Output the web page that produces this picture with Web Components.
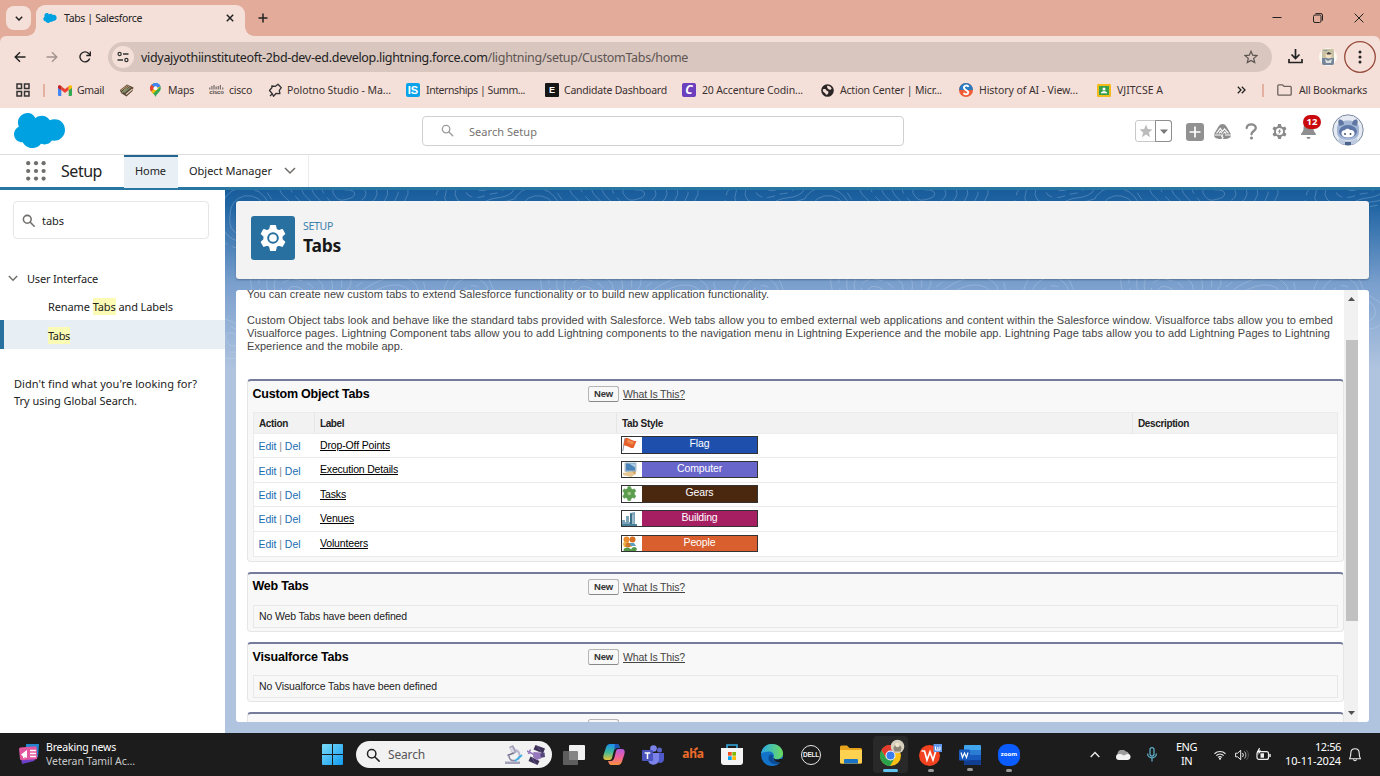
<!DOCTYPE html>
<html lang="en">
<head>
<meta charset="utf-8">
<title>Tabs | Salesforce</title>
<style>
html,body{margin:0;height:100%;overflow:hidden}
body{font-family:"Noto Sans","Open Sans",sans-serif;font-size:11px;color:#222}
</style>
</head>
<body>
<desktop-screen></desktop-screen>
<script>
const svg=(w,h,vb,body,more='')=>`<svg width="${w}" height="${h}" viewBox="${vb}" fill="none" ${more}>${body}</svg>`;
const CLOUD='<path fill="#00a1e0" d="M21 6a10 10 0 0 1 7-3c4 0 7 2 8.500 5a12 12 0 0 1 4.800-1C48 7 52 12.500 52 19s-5 12-11 12l-2.500-.3A8.500 8.500 0 0 1 31 35l-3.500-.7A10 10 0 0 1 18.500 39c-4.500 0-8-3-9.500-6.500H7C3 32 0 28 0 23.500 0 20 2 16.800 5 15A11 11 0 0 1 4 10.500C4 5 8.500 0 14 0c3.500 0 6 2 7.500 5z"/>';
const GEAR='<path fill-rule="evenodd" d="M10 1.500h4l.7 3.100 2.200 1.300 3-1 2 3.500-2.300 2.100v2.900l2.300 2.100-2 3.500-3-1-2.200 1.300-.7 3.200h-4l-.7-3.200-2.200-1.300-3 1-2-3.500 2.300-2.100v-2.900L2.100 8.400l2-3.500 3 1 2.200-1.300zM12 7a5 5 0 1 0 0 10 5 5 0 0 0 0-10z"/>';
const MAG=(s,c,w)=>svg(s,s,'0 0 16 16',`<circle cx="6.500" cy="6.500" r="4.800" stroke="${c}" stroke-width="${w}"/><path d="M10.200 10.200L15 15" stroke="${c}" stroke-width="${w}" stroke-linecap="round"/>`);
const I={
 cloud:svg(51,35,'0 0 52 39',CLOUD,'preserveAspectRatio="none"'),
 cloudS:svg(14,10,'0 0 52 39',CLOUD),
 down:svg(8,5,'0 0 8 5','<path d="M.8.8L4 4 7.200.8" stroke="#222" stroke-width="1.500"/>'),
 close:svg(8,8,'0 0 8 8','<path d="M.8.8l6.400 6.400M7.200.8L.8 7.200" stroke="#222" stroke-width="1.500"/>'),
 plus:svg(10,10,'0 0 10 10','<path d="M5 .5v9M.5 5h9" stroke="#222" stroke-width="1.500"/>'),
 min:svg(10,10,'0 0 10 10','<path d="M.5 4.500h9" stroke="#222"/>'),
 max:svg(10,10,'0 0 10 10','<rect x=".5" y="2" width="7.500" height="7.500" rx="1.500" stroke="#222"/><path d="M2.500.6H8a1.500 1.500 0 0 1 1.500 1.500v5.500" stroke="#222"/>'),
 x:svg(10,10,'0 0 10 10','<path d="M.6.600l8.800 8.800M9.400.6L.6 9.400" stroke="#222"/>'),
 back:svg(12,12,'0 0 12 12','<path d="M11.500 6H1.500M6 1.200L1.200 6 6 10.800" stroke="#222" stroke-width="1.400"/>'),
 fwd:svg(12,12,'0 0 12 12','<path d="M.5 6h10M6 1.200L10.800 6 6 10.800" stroke="#a1938e" stroke-width="1.400"/>'),
 reload:svg(12,12,'0 0 12 12','<path d="M10.700 7.500A5 5 0 1 1 9.600 2.400L11 3.800" stroke="#222" stroke-width="1.400"/><path d="M11.300.5v4H7.300" stroke="#222" stroke-width="1.400"/>'),
 tune:svg(12,12,'0 0 12 12','<circle cx="2.600" cy="3" r="1.600" stroke="#333" stroke-width="1.200"/><path d="M6 3h5.500M.5 9H6" stroke="#333" stroke-width="1.300"/><circle cx="9.400" cy="9" r="1.600" stroke="#333" stroke-width="1.200"/>'),
 star:svg(14,14,'0 0 14 14','<path d="M7 1.300l1.700 3.900 4.200.4-3.200 2.800 1 4.200L7 10.400l-3.700 2.200 1-4.200L1.100 5.600l4.200-.4z" stroke="#5b5350" stroke-width="1.200"/>'),
 dl:svg(15,15,'0 0 15 15','<path d="M7.500 0v9M3.500 5.500l4 4 4-4M1 10v3.500h13V10" stroke="#222" stroke-width="1.700"/>'),
 prof:svg(18,18,'0 0 18 18','<circle cx="9" cy="9" r="9" fill="#fbf7f1"/><rect x="3" y="1" width="12" height="16" rx="2" fill="#c9c1a4"/><path d="M3 10h12v5a2 2 0 0 1-2 2H5a2 2 0 0 1-2-2z" fill="#76859a"/><circle cx="9.500" cy="7.500" r="3" fill="#f1dfc0"/><path d="M7.500 5.500l2-1.500 3 1.500-1 1H8z" fill="#444"/><path d="M6 11l3 2 4-2-1 4H7z" fill="#dce2de"/><path d="M4.500 2.500h4" stroke="#86a0a4"/>'),
 menu:svg(32,32,'0 0 32 32','<circle cx="16" cy="16" r="15.300" stroke="#96483a" stroke-width="1.300"/><g fill="#222"><circle cx="16" cy="11" r="1.500"/><circle cx="16" cy="16" r="1.500"/><circle cx="16" cy="21" r="1.500"/></g>'),
 apps:svg(14,14,'0 0 14 14','<g stroke="#333" stroke-width="1.500"><rect x="1" y="1" width="4.500" height="4.500"/><rect x="8.500" y="1" width="4.500" height="4.500"/><rect x="1" y="8.500" width="4.500" height="4.500"/><rect x="8.500" y="8.500" width="4.500" height="4.500"/></g>'),
 bar:svg(2,13,'0 0 2 13','<path d="M1 0v13" stroke="#e0a593" stroke-width="1.600"/>'),
 gmail:svg(14,11,'0 0 14 11','<path d="M0 1.500V10a1 1 0 0 0 1 1h2.300V4z" fill="#4285f4"/><path d="M10.700 11H13a1 1 0 0 0 1-1V1.500L10.700 4z" fill="#34a853"/><path d="M3.300 5V1.200L7 4l3.700-2.800V5L7 7.900z" fill="#ea4335"/><path d="M0 1.500V3l3.300 2.300V1.200L2.600.600C1.400-.3 0 .3 0 1.500z" fill="#c5221f"/><path d="M14 1.500V3l-3.300 2.300V1.200l.7-.6C12.600-.3 14 .3 14 1.500z" fill="#fbbc04"/>'),
 books:svg(14,14,'0 0 14 14','<path d="M0 7l7-5.500L13.500 4.500 12.500 8 6.500 13.500 1 10z" fill="#5a4334"/><path d="M1 7.500L7.500 2.500M2.500 8.500l6.500-5.500" stroke="#c9a678"/><path d="M4 9.500l6.500-5.500M1.500 10L7 5.500" stroke="#7e8f6c" stroke-width="1.200"/><path d="M6 11.500l6.500-5.500" stroke="#e0d5bd" stroke-width="1.100"/>'),
 maps:svg(11,14,'0 0 11 14','<path d="M5.500 0A5.300 5.300 0 0 1 10.800 5.300C10.800 9 7 10 5.500 14 4 10 .2 9 .2 5.300A5.300 5.300 0 0 1 5.500 0z" fill="#34a853"/><path d="M5.500 0A5.300 5.300 0 0 1 10.500 3.500L5.500 5.300 1.500 1.800A5.300 5.300 0 0 1 5.500 0z" fill="#4285f4"/><path d="M1.500 1.800L5.500 5.300 1.300 8.500A5 5 0 0 1 1.500 1.800z" fill="#ea4335"/><path d="M1.300 8.500l7-7A5 5 0 0 1 10.500 3.500L3 10.700z" fill="#fbbc04"/><path d="M5.500 0a5.300 5.300 0 0 1 5 3.500L6 5z" fill="#4285f4"/><circle cx="5.500" cy="5.200" r="2" fill="#fff"/>'),
 cisco:`<div style="width:15px;text-align:center">${svg(15,5,'0 0 15 5','<path d="M.8 2.500v2M2.900 1v3.500M5 0v4.500M7.100 1.500v3M9.200 1v3.500M11.300 0v4.500M13.800 2.500v2" stroke="#5b5553"/>')}<div style="font:bold 6px/5px 'Liberation Sans';color:#544e4c;letter-spacing:-.2px">cisco</div></div>`,
 polo:svg(15,15,'0 0 15 15','<path d="M4.300 10.700L1.500 7.500 4 4.500 3.800 3l3.700.3L10 1.200l3.300 3.500-2 2.600.6 3.400-3.900-.2-2.500 2.800zM4.300 10.700L2 13" stroke="#333" stroke-width="1.300" stroke-linejoin="round"/>'),
 is:'<div style="width:14px;height:14px;border-radius:2px;background:#0aa3ea;color:#fff;font:bold 11px/14px \'Liberation Sans\';text-align:center">IS</div>',
 e:'<div style="width:14px;height:14px;border-radius:1px;background:#161616;color:#fff;font:bold 9px/14px \'Liberation Sans\';text-align:center">E</div>',
 c:'<div style="width:14px;height:14px;border-radius:2px;background:#6b3fbe;color:#fff;font:italic bold 12px/14px \'Noto Sans\';text-align:center">C</div>',
 globe:svg(13,13,'0 0 13 13','<circle cx="6.500" cy="6.500" r="6.300" fill="#2b2625"/><path d="M1.800 5.500C3.500 4.700 5 5.200 5.300 6.200S7.500 6.700 7.500 8.200 5.800 11 5.300 10.800 4.500 9 3.500 8.700 1.800 7.500 1.800 5.500zM6 2c1-.9 4 .7 4.700 2.500-1 1.500-1.700 1.500-2.700 1S6 3.800 6 2z" fill="#f5e0d9"/>'),
 hist:svg(14,14,'0 0 14 14','<circle cx="7" cy="7" r="7" fill="#f05a35"/><path d="M0 7a7 7 0 0 1 14 0z" fill="#2a7bc0"/><path d="M9.500 4C8.500 1.500 4.500 2.500 5 5s4.500 2.300 4.300 4.500S5.500 12 4.700 9.700" stroke="#fff" stroke-width="1.900"/>'),
 cls:svg(14,13,'0 0 14 13','<rect width="14" height="13" rx="1" fill="#f2bc1c"/><rect x="2" y="2" width="10" height="9" fill="#3a9f4a"/><circle cx="7" cy="5" r="1.500" fill="#fff"/><path d="M3.800 9.200c.5-2.500 5.900-2.500 6.400 0z" fill="#fff"/>'),
 more:svg(9,8,'0 0 9 8','<path d="M.8.8L4 4 .8 7.200M4.800.8L8 4 4.800 7.200" stroke="#222" stroke-width="1.300"/>'),
 folder:svg(15,12,'0 0 15 12','<path d="M.8 1.800a1 1 0 0 1 1-1h3.700L7 2.300h6.200a1 1 0 0 1 1 1v6.900a1 1 0 0 1-1 1H1.800a1 1 0 0 1-1-1z" stroke="#6c615d" stroke-width="1.300"/>'),
 plusB:svg(18,18,'0 0 18 18','<rect width="18" height="18" rx="3" fill="#919191"/><path d="M9 3.500v11M3.500 9h11" stroke="#fff" stroke-width="1.700"/>'),
 trail:svg(17,15,'0 0 17 15','<path d="M8.500 0C10 0 11.500.8 12.500 2.500L16.300 9c1 2 .7 4-1 5-1.800 1-4.300 1-6.800 1s-5 0-6.800-1c-1.700-1-2-3-1-5L4.500 2.500C5.500.8 7 0 8.500 0z" fill="#8d8d8d"/><path d="M2.500 9.300L6.300 4.300 8.500 7.300 10.500 4.800l4 4.500M5 9.500l1.500-2 1.700 2M9.500 9.500L10.800 8l1.500 1.500" stroke="#fff" stroke-width="1.100"/><path d="M.5 11h7M11 11h6M9 10.500l-1.300 1.700L9 13.500 8 15" stroke="#fff" stroke-width="1.200"/>'),
 q:svg(13,17,'0 0 13 17','<path d="M1.700 5C1.700 2.800 3.700 1.300 6.200 1.300S10.800 2.800 10.800 5c0 3-4.300 3-4.300 6.300" stroke="#8a8a8a" stroke-width="2.300" stroke-linecap="round"/><circle cx="6.500" cy="15" r="1.600" fill="#8a8a8a"/>'),
 gear2:svg(17,17,'0 0 24 24',`<g fill="#8a8a8a">${GEAR}</g><path d="M13.500 7.500l-4 5h2L10.500 16.500l4-5.500h-2z" fill="#8a8a8a"/>`),
 bell:svg(17,17,'0 0 17 17','<path d="M8.500 0C5 0 3.500 2.500 3.500 5.500c0 3.500-2.500 4-2.500 6.500h15c0-2.500-2.500-3-2.500-6.500C13.500 2.500 12 0 8.500 0z" fill="#8f8f8f"/><path d="M6.500 14h4a2 2 0 0 1-4 0z" fill="#8f8f8f"/>'),
 ava:svg(32,32,'0 0 32 32','<circle cx="16" cy="16" r="15.200" fill="#e6ebf3" stroke="#7d8ba0"/><path d="M5 14C5 9 10 6.500 16 6.500S27 9 27 14v4c0 5-4 8-11 8S5 23 5 18z" fill="#a3b5d5"/><path d="M7 5.500c2.500-.5 5 1 5 5L7.500 12C6 9.500 6 7 7 5.500zM25 5.500c-2.500-.5-5 1-5 5l4.500 1.500c1.500-2.500 1.500-5 .5-6.500z" fill="#5f76a3"/><ellipse cx="16" cy="17.500" rx="9" ry="6.500" fill="#5d77a7"/><path d="M9.500 20c-.5-2.500 1.500-4 3.300-3.700 1.200-2 4.200-2 5.200-.3 2.500-.6 5 1.300 4.500 4-.5 2.500-3 3.500-6.500 3.500s-6-1-6.500-3.500z" fill="#fff"/><circle cx="13" cy="20" r=".9" fill="#345"/><circle cx="18.500" cy="20" r=".9" fill="#345"/><path d="M7 24c5 3.500 13 3.500 18 0l1 4c-5 4-15 4-20 0z" fill="#bdcae0"/><path d="M13 28h6v3h-6z" fill="#4d648c"/>'),
 waffle:svg(20,20,'0 0 20 20','<g fill="#706e6b">'+[2.2,10,17.6].map(y=>[2.2,10,17.6].map(x=>`<circle cx="${x}" cy="${y}" r="2.100"/>`).join('')).join('')+'</g>'),
 chev:svg(12,8,'0 0 12 8','<path d="M1 1l5 5 5-5" stroke="#706e6b" stroke-width="1.500"/>'),
 news:svg(22,22,'0 0 22 22','<path d="M8 2l13 0-1 13-12 3z" fill="#2186cf"/><path d="M3 15l12 2 3-1-2 3-12 3z" fill="#6d41c8"/><path d="M2.500 5.500L17 4.300a1.500 1.500 0 0 1 1.700 1.400l.6 10a1.500 1.500 0 0 1-1.400 1.600L3.500 18.300A1.500 1.500 0 0 1 2 17L1 7a1.500 1.500 0 0 1 1.500-1.500z" fill="#e2559f"/><path d="M12 8.500h6M12 11.500h6M12 14.500h6" stroke="#fff" stroke-width="1.300"/><path d="M3 12.500L9 8v8l-2.500-1v1.500l-1.500-.5v-1.500z" fill="#fff"/>'),
 win:svg(21,21,'0 0 21 21','<defs><linearGradient id="w" x1="0" y1="0" x2="1" y2="1"><stop stop-color="#7bdcf8"/><stop offset="1" stop-color="#129bf0"/></linearGradient></defs><path d="M0 1a1 1 0 0 1 1-1h9v10H0zM11 0h9a1 1 0 0 1 1 1v9H11zM0 11h10v10H1a1 1 0 0 1-1-1zM11 11h10v9a1 1 0 0 1-1 1h-9z" fill="url(#w)"/>'),
 micro:svg(18,19,'0 0 18 19','<path d="M4 2l4-2 4 7-4 2.500z" fill="#a19fb8"/><path d="M5 3l2-1 2.500 5-2 1z" fill="#dcdbe6"/><path d="M10.500 5c4 1 5.500 6 2.500 10" stroke="#b9b6cb" stroke-width="2"/><path d="M4 11c0 3 2 5 6 4.500" stroke="#8b87a5" stroke-width="1.600"/><path d="M0 16.500h15V19H0z" fill="#a3a0ba"/><path d="M10 16l7-6" stroke="#3eaee5" stroke-width="1.800"/><path d="M2.500 10.500l6-2.500" stroke="#77748f" stroke-width="1.600"/>'),
 sat:svg(20,20,'0 0 20 20','<path d="M8.500 0l9.500 3.500-2 5-9.500-4zM3.500 11.500l9 4.500-2 4-9-4z" fill="#3f3259"/><path d="M10 1l5 7M5 13l4 6" stroke="#6b5a92" stroke-width=".8"/><path d="M12.500 8.500l5-1 .5 4.500-5 1z" fill="#54457a"/><path d="M6.500 7L13 7.500l1 6-4.500 1.500L6 12z" fill="#9679bd"/><path d="M0 6l7 3.500M3.500 4.500L1.500 9" stroke="#9679bd" stroke-width="1.600"/>'),
 task:svg(22,20,'0 0 22 20','<rect x="6" width="16" height="15" rx="1" fill="#f1f1f1"/><rect x="0" y="6" width="15" height="14" rx="1" fill="#6d6d6d" fill-opacity=".82"/>'),
 copilot:svg(22,21,'0 0 22 21','<defs><linearGradient id="c1" x2="0" y2="1"><stop stop-color="#1a8ff0"/><stop offset=".5" stop-color="#3cb99a"/><stop offset="1" stop-color="#e8c33a"/></linearGradient><linearGradient id="c2" x2="0" y2="1"><stop stop-color="#b45ce0"/><stop offset=".5" stop-color="#f0609c"/><stop offset="1" stop-color="#f9913c"/></linearGradient></defs><path d="M7 0h7c2 0 2 2 3 4h-3c-2 0-3 2-3.500 4L9 14c-.5 1.500-1.500 2-3 2H3c-3 0-3-3-2.300-5.500L3 3.500C3.700 1.500 5 0 7 0z" fill="url(#c1)"/><path d="M15 21H8c-2 0-2-2-3-4h3c2 0 3-2 3.500-4L13 7c.5-1.500 1.500-2 3-2h3c3 0 3 3 2.300 5.500L19 17.500c-.7 2-2 3.500-4 3.500z" fill="url(#c2)"/><path d="M12 0h2c2 0 2 2 3 4h-3c-1.500 0-2.500 1-3 2.500z" fill="#1d55b8"/>'),
 teams:svg(22,20,'0 0 22 20','<circle cx="17.500" cy="5" r="2.500" fill="#5b63c8"/><circle cx="11.500" cy="3.500" r="3.300" fill="#7b83eb"/><path d="M14 8h8v6c0 5-7 5-8 1z" fill="#5059c9"/><path d="M6 8h11v6c0 7-10 8-11 1z" fill="#7b83eb"/><rect y="5" width="11" height="11" rx="1" fill="#4b53bc"/><path d="M2.700 8h5.600M5.500 8v6" stroke="#fff" stroke-width="1.500"/>'),
 aha:'<div style="font:bold 12px/20px \'Noto Sans\';color:#ee6c2a;width:22px;text-align:center;letter-spacing:-.3px;position:relative;top:-1px">aha<i style="position:absolute;left:12px;top:4px;width:4px;height:1.500px;transform:rotate(-35deg);background:#ee6c2a"></i></div>',
 store:svg(22,21,'0 0 22 21','<path d="M6 4V1h10v3" stroke="#33a9e0" stroke-width="1.600"/><path d="M0 4h22v14a3 3 0 0 1-3 3H3a3 3 0 0 1-3-3z" fill="#f4f4f4"/><path d="M7 8h3.700v3.700H7z" fill="#f25022"/><path d="M11.300 8H15v3.700h-3.700z" fill="#7fba00"/><path d="M7 12.300h3.700V16H7z" fill="#00a4ef"/><path d="M11.300 12.300H15V16h-3.700z" fill="#ffb900"/>'),
 edge:svg(22,22,'0 0 22 22','<defs><linearGradient id="e1"><stop stop-color="#2aa8e8"/><stop offset="1" stop-color="#6cdc5c"/></linearGradient></defs><circle cx="11" cy="11" r="11" fill="#1273c8"/><path d="M0 10C1 3 6 0 11 0c7 0 11 5 11 9.500 0 4-3 5.500-6 5.500-2 0-4-.7-3.500-1.500C14 11 12 7.500 8 7.500c-4 0-7 1.500-8 2.500z" fill="url(#e1)"/><path d="M7.500 14c0 4 4 6.500 8.500 6 2-.3 3.500-1.500 5-4-6 3-10 1-9-4-2-3-4.500-1-4.500 2z" fill="#0c4a94"/><path d="M12.500 12.500c-.5 3 4 3.800 7.500 2.200l2.500.8-1.500 2.500c-5 1-9-1-8.500-5.500z" fill="#191919"/>'),
 dell:`<div style="box-sizing:border-box;width:20px;height:20px;border:1.300px solid #e7e7e7;border-radius:50%;color:#eee;font:bold 6.500px/17px 'Liberation Sans';text-align:center;letter-spacing:-.3px">DELL</div>`,
 files:svg(22,19,'0 0 22 19','<path d="M0 2a1.500 1.500 0 0 1 1.500-1.500H7L9.500 3H20.500A1.500 1.500 0 0 1 22 4.500V17a1.500 1.500 0 0 1-1.500 1.500h-19A1.500 1.500 0 0 1 0 17z" fill="#e8a31c"/><path d="M0 5h22v12a1.500 1.500 0 0 1-1.500 1.500h-19A1.500 1.500 0 0 1 0 17z" fill="#ffd150"/><path d="M4 18.500V15a1 1 0 0 1 1-1h12a1 1 0 0 1 1 1v3.500z" fill="#1a73c4"/>'),
 chrome:svg(30,34,'0 0 30 34','<g transform="translate(1 9)"><circle cx="10.500" cy="10.500" r="10.500" fill="#fbc116"/><path d="M10.500 10.500L1.400 5.200A10.500 10.500 0 0 1 19.600 5.200z" fill="#e33b2e"/><path d="M10.500 5.500h9.300A10.500 10.500 0 0 0 1.400 5.200l4.700 8z" fill="#e33b2e"/><path d="M1.400 5.200A10.500 10.500 0 0 0 10 21l4.800-8.200-4.300 2.700-4.700-2.700z" fill="#2ba24c"/><circle cx="10.500" cy="10.500" r="5" fill="#fff"/><circle cx="10.500" cy="10.500" r="4" fill="#3a7df0"/></g><circle cx="18.500" cy="10.500" r="6.800" fill="#d8d0bf"/><path d="M14.500 12.500c0-5 8-5 8 0l-1 3h-6z" fill="#8b8678"/><circle cx="18.500" cy="9" r="2.200" fill="#efe3cd"/>'),
 wps:svg(23,22,'0 0 23 22','<circle cx="10.500" cy="11.500" r="10.500" fill="#f3421f"/><path d="M2.500 7h3l2.500 9L11 8l3 8 2.800-9h3" stroke="#fff" stroke-width="1.700"/><rect x="14.500" width="8.500" height="8" fill="#6097ea"/><path d="M16.500 2.500v3.500h4.500V2.500M18.800 3v2.500" stroke="#fff"/>'),
 word:svg(22,20,'0 0 22 20','<rect x="5" width="17" height="20" rx="1" fill="#41a5ee"/><path d="M5 5h17v5H5z" fill="#2b7cd3"/><path d="M5 10h17v5H5z" fill="#185abd"/><path d="M5 15h17v4a1 1 0 0 1-1 1H6a1 1 0 0 1-1-1z" fill="#103f91"/><rect y="4.500" width="11" height="11" rx="1" fill="#185abd"/><path d="M2 7.500l1.500 5L5.500 8l2 4.500L9 7.500" stroke="#fff" stroke-width="1.200"/>'),
 zoom:'<div style="width:22px;height:22px;border-radius:9px;background:#0b5cff;color:#fff;font:bold 6px/21px \'Noto Sans\';text-align:center">zoom</div>',
 up:svg(10,7,'0 0 10 7','<path d="M.7 6L5 1.500 9.300 6" stroke="#eee" stroke-width="1.300"/>'),
 od:svg(15,10,'0 0 15 10','<path d="M2 6a4.500 4.500 0 0 1 7.500-4.800A4 4 0 0 1 13 4L8 7z" fill="#9c9c9c"/><path d="M3 10a3 3 0 0 1 0-6c2 0 3 .3 4.500 1.500L12 3.700a3.200 3.200 0 0 1 0 6.300z" fill="#f2f2f2"/>'),
 mic:svg(10,15,'0 0 10 15','<rect x="3" y=".6" width="4" height="8.500" rx="2" stroke="#63b8d2" stroke-width="1.200"/><path d="M.6 6.500a4.400 4.400 0 0 0 8.800 0M5 11v3.500" stroke="#63b8d2" stroke-width="1.200"/>'),
 wifi:svg(12,10,'0 0 12 10','<path d="M.5 3.700a8 8 0 0 1 11 0M2.300 5.600a5.500 5.500 0 0 1 7.400 0M4 7.400a3 3 0 0 1 4 0" stroke="#e8e8e8" stroke-width="1.200"/><circle cx="6" cy="8.800" r="1" fill="#fff"/>'),
 vol:svg(14,12,'0 0 14 12','<path d="M.6 4.200h2L5.700 1.300v9.400L2.600 7.800h-2z" stroke="#eee"/><path d="M7.500 4a3 3 0 0 1 0 4" stroke="#eee"/><path d="M9.500 2.500a5 5 0 0 1 0 7" stroke="#bbb"/><path d="M11.500 1.200a7 7 0 0 1 0 9.600" stroke="#555"/>'),
 bat:svg(15,13,'0 0 15 13','<rect x="1" y="3.600" width="11.500" height="7.800" rx="2" stroke="#eee" stroke-width="1.200"/><rect x="4.500" y="5.300" width="3.500" height="4.400" fill="#eee"/><path d="M14 6v3" stroke="#eee" stroke-width="1.500"/><path d="M3 0L.8 4h2l-.6 3 3-4.500h-2L4 0z" fill="#fff"/>'),
 ring:svg(12,14,'0 0 12 14','<path d="M6 .7c-2.700 0-4.200 2-4.200 4.500 0 3-.6 4-1.200 5.500h10.800c-.6-1.500-1.200-2.500-1.200-5.500C10.200 2.700 8.700.7 6 .7zM4.500 11.500c.3 1.700 2.700 1.700 3 0" stroke="#eee" stroke-width="1.100"/>'),
 flag:svg(18,16,'0 0 18 16','<path d="M3 1L.8 14" stroke="#8d99a5"/><path d="M3 1.500c4-2 5 2.500 11.500 2.500L11.500 11C8 11.500 6 8.500 1.500 8.500z" fill="#e5602a"/><path d="M5.500 2.500c2 0 3 2 6.500 2l-1 3c-3 0-4-2-6-2z" fill="#f08a4d"/>'),
 computer:svg(18,16,'0 0 18 16','<rect x="2.500" y=".5" width="12" height="9.500" rx="1" fill="#a9bdc8"/><rect x="4" y="1.500" width="9" height="7" fill="#4a83b8"/><path d="M7 1.500h6v4z" fill="#a9cbe3"/><path d="M1 11l8-1.500 5.500 2L9 15l-8-2z" fill="#e6c692"/><path d="M10 9.500h4l-1 3z" fill="#cf9f5d"/>'),
 gears:svg(18,16,'0 0 18 16',`<g transform="scale(.66) translate(-1 -.5)" fill="#5c9d50" stroke="#5c9d50">${GEAR}<circle cx="12" cy="12" r="7"/><circle cx="12" cy="12" r="3" fill="#a8cc8c"/></g>`),
 building:svg(18,16,'0 0 18 16','<path d="M0 15V9h3v2h1V5h3v6h1V2l5-1v14z" fill="#7ba3b8"/><path d="M8 15V2l2 1v12z" fill="#3c6f8a"/><path d="M10 4h2v9h-2z" fill="#9cbccb"/><path d="M0 13h15v2H0z" fill="#4c7f9a"/>'),
 people:svg(18,16,'0 0 18 16','<circle cx="4.500" cy="3.500" r="3" fill="#e78b2f"/><circle cx="10.500" cy="3.500" r="3" fill="#d66f22"/><path d="M1 8c0-3 6-3 7 0l2 3H2z" fill="#efb145"/><path d="M8 7h4l2 3H8z" fill="#5a9fc0"/><circle cx="6" cy="9" r="2.500" fill="#ce762d"/><path d="M1.500 15c0-5 7.500-4 8.500 0zM9 15c0-5 5-5 6-2l-1 2z" fill="#55984a"/>')
};

const T=(w,text,css='')=>`<span data-w="${w}" style="${css}">${text}</span>`;
/* Builds a flex row; every entry is [start, width, content]. */
const row=(items,css='')=>{let at=0;return `<div class="row" style="${css}">`+items.map(([x,w,c,s=''])=>{const m=x-at;at=x+w;return `<div class="cell" style="margin-left:${m}px;width:${w}px;${s}">${c}</div>`}).join('')+'</div>';};

class Part extends HTMLElement{
  connectedCallback(){
    if(this.shadowRoot)return;
    const r=this.attachShadow({mode:'open'});
    r.innerHTML=`<style>:host{display:block;box-sizing:border-box}*{box-sizing:border-box}svg{display:block;flex:none}.row{display:flex;align-items:center;height:100%}.cell{flex:none;display:flex;align-items:center;white-space:nowrap}[data-w]{display:inline-block;white-space:pre}${this.css()}</style>${this.html()}`;
    r.querySelectorAll('[data-w]').forEach(e=>{
      const n=e.getBoundingClientRect().width,k=e.textContent.length;
      if(n)e.style.letterSpacing=((+e.dataset.w-n)/k).toFixed(3)+'px';
    });
  }
  css(){return ''} html(){return '<slot></slot>'}
}
const def=(name,css,html)=>customElements.define(name,class extends Part{css(){return css} html(){return typeof html==='function'?html(this):html}});

/* Browser chrome */
def('tab-strip',`:host{height:36px;background:#e3ac9a}
.list{width:25px;height:24px;border-radius:8px;background:#f5e0d9;justify-content:center}
.tab{align-self:flex-end;height:31px;width:209px;border-radius:9px 9px 0 0;background:#f5e0d9;position:relative}
.tab:before,.tab:after{content:"";position:absolute;bottom:0;width:9px;height:9px}
.tab:before{left:-9px;background:radial-gradient(circle at 0 0,transparent 8.500px,#f5e0d9 9px)}
.tab:after{right:-9px;background:radial-gradient(circle at 100% 0,transparent 8.500px,#f5e0d9 9px)}
.wrap{display:flex;align-items:center;height:36px}`,
()=>`<div class="wrap"><div class="cell list" style="margin-left:6px">${I.down}</div><div class="tab" style="margin-left:5px">${row([[7,14,I.cloudS],[28,78,T(78,'Tabs | Salesforce','font-size:10.500px')],[190,8,I.close]],'height:26px')}</div>
<div class="cell" style="margin-left:13px">${I.plus}</div><div class="cell" style="margin-left:1004px">${I.min}</div><div class="cell" style="margin-left:31px">${I.max}</div><div class="cell" style="margin-left:31px">${I.x}</div></div>`);

def('address-bar',`:host{height:41px;background:#f5e0d9;border-radius:6px 6px 0 0}
.omni{height:30px;width:1164px;border-radius:15px;background:#d8c6bf}.tune{width:22px;height:22px;border-radius:50%;background:#f5e0d9;justify-content:center}`,
()=>row([[14,12,I.back],[46,12,I.fwd],[79,12,I.reload],[108,1164,`<div class="omni">${row([[4,22,`<div class="cell tune">${I.tune}</div>`],[33,547,T(547,'vidyajyothiinstituteoft-2bd-dev-ed.develop.lightning.force.com<span style="color:#5e5552">/lightning/setup/CustomTabs/home</span>','font-size:12.500px'),'margin-top:1px'],[1136,14,I.star]])}</div>`],[1288,15,I.dl],[1319,18,I.prof],[1344,32,I.menu]]));

def('bookmark-bar',`:host{height:31px;background:#f5e0d9;font-size:10.500px;color:#3a3130;padding-bottom:5px}`,
()=>row([[16,14,I.apps],[43,2,I.bar],[58,14,I.gmail],[77,27,T(27,'Gmail')],[120,14,I.books],[150,11,I.maps],[168,26,T(26,'Maps')],[209,15,I.cisco],[229,23,T(23,'cisco')],[268,15,I.polo],[287,104,T(104,'Polotno Studio - Ma...')],[406,14,I.is],[426,99,T(99,'Internships | Summ...')],[545,14,I.e],[564,103,T(103,'Candidate Dashboard')],[682,14,I.c],[702,101,T(101,'20 Accenture Codin...')],[821,13,I.globe],[840,102,T(102,'Action Center | Micr...')],[959,14,I.hist],[979,99,T(99,'History of AI - View...')],[1097,14,I.cls],[1117,46,T(46,'VJITCSE A')],[1237,9,I.more],[1262,2,I.bar],[1277,15,I.folder],[1299,68,T(68,'All Bookmarks')]]));

/* Salesforce header */
def('global-header',`:host{height:47px;background:#fff;border-bottom:1px solid #dedede}
.search{width:482px;height:30px;border:1px solid #d2d0cf;border-radius:4px;color:#757371;font-size:11px}
.fav{display:flex;border:1px solid #c9c9c9;border-radius:3px;height:22px;width:37px}.fav div{display:flex;align-items:center;justify-content:center}.fav .a{width:20px}.fav .b{flex:1;border:1px solid #8e8e8e;border-radius:0 3px 3px 0;margin:-1px}
.bellbox{position:relative}.badge{position:absolute;left:3px;top:-8px;width:18px;height:14px;border-radius:8px;background:#c9090c;color:#fff;font:bold 9.500px/14px "Noto Sans";text-align:center}`,
()=>row([[14,51,I.cloud,'margin-top:-2px'],[422,482,`<div class="search">${row([[18,13,MAG(12.5,'#999',1.6)],[46,68,T(68,'Search Setup'),'margin-top:1px']])}</div>`,'margin-top:-1px'],
[1135,37,`<div class="fav"><div class="a">${svg(14,14,'0 0 14 14','<path d="M7 .5l1.800 4.600 4.700.3-3.700 3 1.300 4.900L7 10.600l-4.100 2.700 1.300-4.900-3.700-3 4.700-.3z" fill="#bcbcbc"/>')}</div><div class="b">${svg(8,5,'0 0 8 5','<path d="M0 .5h8L4 5z" fill="#777"/>')}</div></div>`],
[1186,18,I.plusB,'margin-top:2px'],[1214,17,I.trail],[1245,13,I.q],[1271,17,I.gear2],[1300,17,`<div class="bellbox">${I.bell}<div class="badge">12</div></div>`],[1332,32,I.ava,'margin-top:-3px']]));

def('context-bar',`:host{height:35px;background:#fff;border-bottom:3px solid #2a76a3;font-size:11px}
.home{height:33px;border-top:2px solid #236592;background:#e8f0f5;padding:0 0 3px 11px;width:54px}.div{width:1px;height:32px;background:#ececec}`,
()=>row([[26,20,I.waffle],[61,41,T(41,'Setup','font-size:16px')],[124,54,`<div class="cell home">${T(31,'Home')}</div>`],[189,83,T(83,'Object Manager'),'margin-top:-1px'],[284,12,I.chev],[308,1,'<div class="div"></div>']]));

/* Setup navigation */
def('setup-nav',`:host{width:225px;flex:none;background:#fff;padding-top:11px;font-size:11px}
.find{height:38px;width:196px;margin-left:13px;border:1px solid #e6e6e6;border-radius:4px}
.group{height:28px;margin-top:25px}.leaf{height:28px}.sel{height:29px;background:#e8eff4;border-left:4px solid #28719e}mark{background:#fbfbb6;color:inherit;padding:1px 0}
.help{margin:26px 0 0 14px;line-height:17px}`,
()=>`<div class="find">${row([[8,13,MAG(13,'#706e6b',1.9)],[28,22,T(22,'tabs')]])}</div>
<div class="group">${row([[8,11,svg(10,7,'0 0 12 8','<path d="M1 1l5 5 5-5" stroke="#706e6b" stroke-width="1.700"/>')],[27,71,T(71,'User Interface')]])}</div>
<div class="leaf">${row([[48,125,T(125,'Rename <mark>Tabs</mark> and Labels')]])}</div>
<div class="sel">${row([[44,22,T(22,'<mark>Tabs</mark>')]],'padding-top:2px')}</div>
<div class="help">${T(183,"Didn't find what you're looking for?")}<br>${T(123,'Try using Global Search.')}</div>`);

/* Content */
def('page-head',`:host{height:78px;flex:none;background:#f3f3f3;border-radius:3px;box-shadow:0 1px 2px #0004;display:flex;align-items:center;padding:0 0 4px 15px}
.ic{width:44px;height:44px;border-radius:3px;background:#28709f;display:flex;align-items:center;justify-content:center}.tx{margin:0 0 0 8px}.s{font-size:10.500px;line-height:14px;color:#3b7fab}.t{font-weight:bold;font-size:17.500px;line-height:25px;color:#181818}`,
()=>`<div class="ic">${svg(28,28,'0 0 24 24',`<g fill="#fff" stroke="#fff" stroke-width="1.200" stroke-linejoin="round">${GEAR}</g><circle cx="12" cy="12" r="5" fill="#28709f"/><circle cx="12" cy="12" r="3.300" fill="#fff"/>`)}</div><div class="tx"><div class="s">${T(30,'SETUP')}</div><div class="t">${T(38,'Tabs')}</div></div>`);

def('tab-swatch',`:host{width:137px;height:17.500px;margin:-1px 0 0 -1px;border:1px solid #333;display:flex;background:#fff;font:10.500px/12px "Liberation Sans",Arial,sans-serif;color:#fff}.i{width:20px;overflow:hidden}.c{flex:1;text-align:center}`,
el=>`<div class="i">${I[el.getAttribute('icon')]}</div><div class="c" style="background:${el.getAttribute('color')}">${T(el.getAttribute('w'),el.getAttribute('label'))}</div>`);

def('related-list',`:host{height:var(--h);border:1px solid #e6e6e6;border-top:2.500px solid #757b9b;border-radius:4px;background:#f8f8f8;margin-bottom:10px;padding:0 5px;flex:none}
.head{height:31px;padding-bottom:5px}.btn{width:31px;height:16px;border:1px solid #b5b5b5;border-bottom-color:#888;border-radius:2.500px;background:#f8f8f8;font-weight:bold;font-size:9.500px;line-height:14px;justify-content:center;display:flex;color:#333}
h3{margin:0;font-size:12.500px;font-weight:bold;color:#000}a{color:#444;text-decoration:underline;font-size:10.500px}`,
el=>`<div class="head">${row([[-.5,+el.getAttribute('w'),`<h3>${T(el.getAttribute('w'),el.getAttribute('name'))}</h3>`,'margin-top:-1px'],[335,31,`<div class="btn">${T(19,'New')}</div>`],[370,62,`<a>${T(62,'What Is This?','text-decoration:underline')}</a>`]])}</div><slot></slot>`);

def('empty-note',`:host{height:23px;border:1px solid #e8e8e8;background:#f8f8f8;padding-left:5px;color:#222;font-size:10.500px}`,el=>row([[0,10,T(el.getAttribute('w'),el.getAttribute('text'))]],'height:20px'));

const DATA=[['Drop-Off Points',70,'flag','#1f4fac','Flag',20],['Execution Details',78,'computer','#6865cb','Computer',45],['Tasks',26,'gears','#4a270f','Gears',28],['Venues',34,'building','#a71f63','Building',36],['Volunteers',48,'people','#d95f2e','People',32]];
def('tabs-table',`:host{display:block;border:1px solid #ebebeb;background:#fff;font-size:10.500px}
.g{display:grid;grid-template-columns:61px 302px 516px 1fr;height:24.400px;border-bottom:1px solid #ececec;align-items:center}.g:last-child{border-bottom:0}.g>div{padding-left:5px}
.h{height:21px;background:#f2f2f2;font-weight:bold;font-size:10px;color:#222}.h>div{border-right:1px solid #e6e6e6;height:20px;line-height:21px}.h>div:last-child{border:0}.g>.a{color:#1a6cb0;padding:1px 0 0 4.500px}i{font-style:normal;color:#888}.g>.l{color:#000;text-decoration:underline;padding-bottom:1.500px}`,
()=>`<div class="g h"><div>${T(29,'Action')}</div><div>${T(24,'Label')}</div><div>${T(41,'Tab Style')}</div><div>${T(51,'Description')}</div></div>`+DATA.map(d=>`<div class="g"><div class="a">${T(42,'Edit <i>|</i> Del')}</div><div class="l">${T(d[1],d[0],'text-decoration:underline')}</div><div><tab-swatch icon="${d[2]}" color="${d[3]}" label="${d[4]}" w="${d[5]}"></tab-swatch></div><div></div></div>`).join(''));

def('scroll-rail',`:host{width:14px;background:#f1f1f1;display:flex;flex-direction:column;align-items:center}.th{width:12px;height:281px;margin:39px 0 90px 1px;background:#c1c1c1}.u{padding-top:7px}`,
()=>`<div class="u">${svg(7,4,'0 0 7 4','<path d="M0 4L3.500 0 7 4z" fill="#505050"/>')}</div><div class="th"></div>${svg(7,4,'0 0 7 4','<path d="M0 0h7L3.500 4z" fill="#505050"/>')}`);

def('setup-frame',`:host{height:432px;flex:none;margin-top:11px;background:#fff;border-radius:3px;overflow:hidden;display:flex;padding-right:11px;font-family:"Liberation Sans",Arial,sans-serif}
.doc{width:1097px;margin-left:11px;height:432px;overflow:hidden;display:flex;flex-direction:column}.p{height:89px;flex:none;line-height:13px;color:#444;font-size:11px;overflow:hidden}.p div{height:13px;margin:0}.p div:first-child{margin-top:-2px;margin-bottom:13px}`,
()=>`<div class="doc"><div class="p"><div>${T(522,'You can create new custom tabs to extend Salesforce functionality or to build new application functionality.')}</div><div>${T(1086,'Custom Object tabs look and behave like the standard tabs provided with Salesforce. Web tabs allow you to embed external web applications and content within the Salesforce window. Visualforce tabs allow you to embed')}</div><div>${T(1083,'Visualforce pages. Lightning Component tabs allow you to add Lightning components to the navigation menu in Lightning Experience and the mobile app. Lightning Page tabs allow you to add Lightning Pages to Lightning')}</div><div>${T(156,'Experience and the mobile app.')}</div></div>
<related-list name="Custom Object Tabs" w="117" style="--h:182.500px"><tabs-table></tabs-table></related-list>
<related-list name="Web Tabs" w="56" style="--h:60.500px"><empty-note w="148" text="No Web Tabs have been defined"></empty-note></related-list>
<related-list name="Visualforce Tabs" w="96" style="--h:60px"><empty-note w="178" text="No Visualforce Tabs have been defined"></empty-note></related-list>
<related-list name="" w="0" style="--h:60px"></related-list></div><scroll-rail></scroll-rail>`);

const topo=()=>{
  let s='';
  const blobs=[[30,30,5],[118,4,6],[205,52,5],[262,-6,5],[70,104,6],[165,118,5],[250,112,4],[10,150,3],[115,170,4],[215,172,4]];
  blobs.forEach(([x,y,n],b)=>{for(let k=1;k<=n;k++){let d='';for(let a=0;a<=30;a++){const t=a/30*6.2832,r=k*7.5*(1+.2*Math.sin(2*t+b)+.15*Math.sin(3*t+b*2+k*.15));d+=(a?'L':'M')+(x+r*1.2*Math.cos(t)).toFixed(1)+' '+(y+r*.9*Math.sin(t)).toFixed(1)}s+=`<path d="${d}Z"${k%3==2?' stroke-dasharray="8 5"':''}/>`}});
  return `<svg width="1155" height="190"><defs><pattern id="t" width="290" height="190" patternUnits="userSpaceOnUse"><g fill="none" stroke="#d6e8f8" stroke-opacity=".27" stroke-width=".9" stroke-linejoin="round">${s}</g></pattern></defs><rect width="1155" height="190" fill="url(#t)"/></svg>`;
};
def('setup-canvas',`:host{flex:1;height:543px;background:linear-gradient(#185c9c 0,#1f64a3 14px,#7ba0ce 95px,#b0c4df 180px);display:grid;overflow:hidden}
.bg,.fg{grid-area:1/1}.fg{display:flex;flex-direction:column;padding:11px;position:relative}`,
()=>`<div class="bg">${topo()}</div><div class="fg"><page-head></page-head><setup-frame></setup-frame></div>`);

/* Windows taskbar */
def('win-taskbar',`:host{height:43px;background:#1c1c1c;color:#fff;font-size:10.500px}
.news{line-height:14px;margin-top:-2px}.pill{width:196px;height:27px;border-radius:14px;background:#f2f2f2;color:#555}
.dot{display:flex;flex-direction:column;align-items:center;position:relative}.dot:after{content:"";position:absolute;bottom:-6px;width:6px;height:2.500px;border-radius:2px;background:#9a9a9a}
.act{width:35px;height:37px;border-radius:4px;background:#292929;padding-left:6px;position:relative}.act:after{content:"";position:absolute;left:10px;bottom:1px;width:15px;height:3px;border-radius:2px;background:#60c4ee}
.two{line-height:14px;font-size:11px;margin-top:-1px}.r{text-align:right}.m{text-align:center}`,
()=>row([[18,22,I.news,'margin-top:-3px'],[46,90,`<div class="news">${T(70,'Breaking news')}<br>${T(89,'Veteran Tamil Ac...','color:#c8c8c8')}</div>`],[322,21,I.win],[356,196,`<div class="pill">${row([[10,14,MAG(14,'#222',1.7)],[32,37,T(37,'Search','font-size:12px')],[149,18,I.micro],[171,20,I.sat]])}</div>`],[563,22,I.task],[603,22,I.copilot],[642,22,I.teams],[682,22,I.aha],[721,22,I.store],[761,22,I.edge],[801,20,I.dell],[840,22,I.files],[873,35,`<div class="act">${I.chrome}</div>`],[919,23,`<div class="dot">${I.wps}</div>`],[959,22,`<div class="dot">${I.word}</div>`],[998,22,`<div class="dot">${I.zoom}</div>`],[1090,10,I.up],[1116,15,I.od],[1147,10,I.mic],[1176,21,`<div class="two m">${T(21,'ENG')}<br>${T(11,'IN')}</div>`],[1214,12,I.wifi],[1235,14,I.vol],[1256,15,I.bat],[1285,57,`<div class="two r">${T(26,'12:56')}<br>${T(56,'10-11-2024')}</div>`],[1349,12,I.ring]]));

def('desktop-screen',`:host{width:1380px;height:776px;overflow:hidden;background:#e3ac9a}.main{display:flex;height:543px}`,
()=>`<tab-strip></tab-strip><address-bar></address-bar><bookmark-bar></bookmark-bar><global-header></global-header><context-bar></context-bar><div class="main"><setup-nav></setup-nav><setup-canvas></setup-canvas></div><win-taskbar></win-taskbar>`);
</script>
</body>
</html>
